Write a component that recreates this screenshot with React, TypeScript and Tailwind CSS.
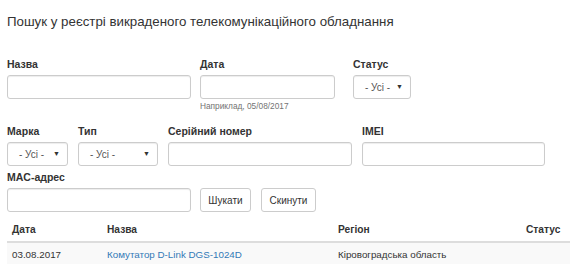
import React from "react";

const inputCls = "h-[24px] border border-[#cccccc] rounded-[3px] bg-white shadow-[inset_0_1px_1px_rgba(0,0,0,0.075)]";

function Sel({ w }: { w: string }) {
  return (
    <div className={`${inputCls} ${w} flex items-center justify-between pl-[11px] pr-[7px] text-[10px] text-[#555]`}>
      <span>- Усі -</span>
      <span className="text-[7px] text-[#333]">▼</span>
    </div>
  );
}

function Label({ children }: { children: React.ReactNode }) {
  return <div className="text-[10.5px] font-bold text-[#333] leading-[12px] mb-[5px]">{children}</div>;
}

export default function App() {
  return (
    <div className="w-[570px] h-[264px] overflow-hidden bg-white text-[#333]" style={{ fontFamily: '"Liberation Sans", Arial, sans-serif' }}>
      <div className="pl-[7px]">
        <h1 className="text-[13.3px] leading-[20px] pt-[12px] text-[#333]">Пошук у реєстрі викраденого телекомунікаційного обладнання</h1>

        <div className="flex mt-[26px]">
          <div className="w-[184px] mr-[9px]">
            <Label>Назва</Label>
            <div className={inputCls} />
          </div>
          <div className="w-[135px] mr-[18px]">
            <Label>Дата</Label>
            <div className={inputCls} />
            <div className="text-[8.3px] text-[#737373] mt-[2px] leading-[11px]">Наприклад, 05/08/2017</div>
          </div>
          <div className="w-[58px]">
            <Label>Статус</Label>
            <Sel w="w-[58px]" />
          </div>
        </div>

        <div className="flex mt-[13px]">
          <div className="w-[61px] mr-[10px]">
            <Label>Марка</Label>
            <Sel w="w-[61px]" />
          </div>
          <div className="w-[80px] mr-[10px]">
            <Label>Тип</Label>
            <Sel w="w-[80px]" />
          </div>
          <div className="w-[184px] mr-[10px]">
            <Label>Серійний номер</Label>
            <div className={inputCls} />
          </div>
          <div className="w-[183px]">
            <Label>IMEI</Label>
            <div className={inputCls} />
          </div>
        </div>

        <div className="mt-[5px]">
          <Label>MAC-адрес</Label>
          <div className="flex items-center">
            <div className={`${inputCls} w-[184px] mr-[9px]`} />
            <div className="h-[24px] w-[51px] mr-[10px] border border-[#cccccc] rounded-[3px] bg-white flex items-center justify-center text-[10px] text-[#333]">Шукати</div>
            <div className="h-[24px] w-[55px] border border-[#cccccc] rounded-[3px] bg-white flex items-center justify-center text-[10px] text-[#333]">Скинути</div>
          </div>
        </div>

        <div className="mt-[12px] text-[9.8px]">
          <div className="flex leading-[12px] pb-[5px] font-bold text-[10.2px] border-b-2 border-[#dddddd] pl-[5px]">
            <div className="w-[95px]">Дата</div>
            <div className="w-[231px]">Назва</div>
            <div className="w-[188px]">Регіон</div>
            <div>Статус</div>
          </div>
          <div className="flex leading-[12px] pt-[6px] pb-[6px] bg-[#f9f9f9] pl-[5px]">
            <div className="w-[95px]">03.08.2017</div>
            <div className="w-[231px] text-[#337ab7]">Комутатор D-Link DGS-1024D</div>
            <div className="w-[188px]">Кіровоградська область</div>
            <div></div>
          </div>
        </div>
      </div>
    </div>
  );
}
